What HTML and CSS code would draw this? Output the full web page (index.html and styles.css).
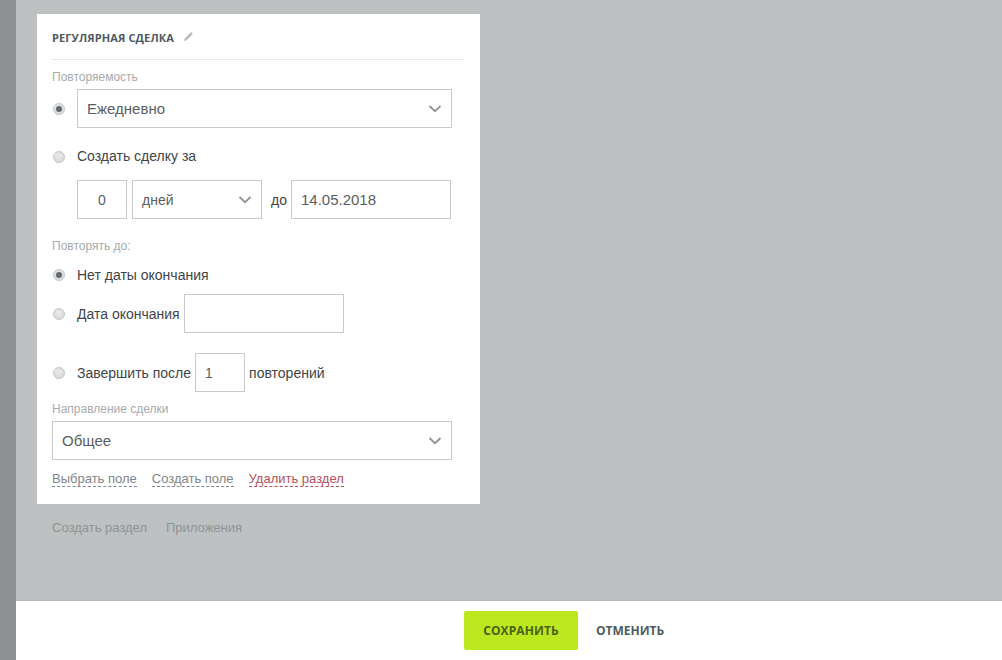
FILE: index.html
```html
<!DOCTYPE html>
<html lang="ru">
<head>
<meta charset="utf-8">
<title>Регулярная сделка</title>
<link rel="stylesheet" href="styles.css">
</head>
<body>
<div class="app">
  <aside class="rail"></aside>
  <div class="main">
    <div class="content">
      <section class="card">
        <header class="card-head">
          <h2 class="card-title">Регулярная сделка</h2>
          <svg class="pencil" width="11" height="11" viewBox="0 0 11 11"><path d="M1 10l.7-2.600L8 1.100 9.900 3 3.600 9.300z" fill="#b9bdbf"/></svg>
        </header>
        <div class="label label-first">Повторяемость</div>
        <div class="row row-select">
          <span class="radio checked"></span>
          <div class="field select grow large">Ежедневно
            <svg class="chev" width="14" height="8" viewBox="0 0 14 8"><path d="M1.500 1l5.500 5.200L12.500 1" fill="none" stroke="#909496" stroke-width="1.800"/></svg>
          </div>
        </div>
        <div class="row row-create">
          <span class="radio"></span>
          <span class="text raised">Создать сделку за</span>
        </div>
        <div class="row row-period">
          <div class="field num center">0</div>
          <div class="field select days">дней
            <svg class="chev" width="14" height="8" viewBox="0 0 14 8"><path d="M1.500 1l5.500 5.200L12.500 1" fill="none" stroke="#909496" stroke-width="1.800"/></svg>
          </div>
          <span class="text">до</span>
          <div class="field date large">14.05.2018</div>
        </div>
        <div class="label label-until">Повторять до:</div>
        <div class="row row-none">
          <span class="radio checked"></span>
          <span class="text">Нет даты окончания</span>
        </div>
        <div class="row row-end">
          <span class="radio"></span>
          <span class="text">Дата окончания</span>
          <div class="field end-date"></div>
        </div>
        <div class="row row-after">
          <span class="radio"></span>
          <span class="text">Завершить после</span>
          <div class="field num">1</div>
          <span class="text">повторений</span>
        </div>
        <div class="label label-dir">Направление сделки</div>
        <div class="field select dir large">Общее
          <svg class="chev" width="14" height="8" viewBox="0 0 14 8"><path d="M1.500 1l5.500 5.200L12.500 1" fill="none" stroke="#909496" stroke-width="1.800"/></svg>
        </div>
        <div class="links">
          <a class="link">Выбрать поле</a>
          <a class="link">Создать поле</a>
          <a class="link danger">Удалить раздел</a>
        </div>
      </section>
      <nav class="below">
        <span>Создать раздел</span>
        <span>Приложения</span>
      </nav>
    </div>
    <footer class="footer">
      <button class="btn-save">Сохранить</button>
      <button class="btn-cancel">Отменить</button>
    </footer>
  </div>
</div>
</body>
</html>
```
FILE: styles.css
```css
* { box-sizing: border-box; }
html, body { margin: 0; height: 100%; }
body { font-family: "Liberation Sans", Arial, sans-serif; font-size: 14px; color: #3f4548; overflow: hidden; }
.app { display: flex; width: 1002px; height: 660px; }
.rail { width: 16px; flex: none; background: #8f9192; }
.main { flex: 1; display: flex; flex-direction: column; background: #bdc1c2; }
.content { flex: 1; padding: 14px 0 0 21px; }
.card { width: 443px; height: 490px; background: #fff; padding: 0 15px; }
.card-head { display: flex; align-items: center; gap: 9px; height: 46px; padding-top: 1px; border-bottom: 1px solid #e8eaea; width: 412px; }
.card-title { margin: 0; font: 700 11px "Open Sans", sans-serif; letter-spacing: .12px; text-transform: uppercase; color: #4d5a63; }
.pencil { margin-bottom: 2px; }
.label { font-size: 12px; line-height: 14px; color: #a7abad; }
.label-first { margin-top: 10px; }
.label-until { margin-top: 20px; }
.label-dir { margin-top: 10px; }
.row { display: flex; align-items: center; }
.row-select { margin-top: 5px; }
.row-create { margin-top: 19px; height: 20px; }
.row-period { margin-top: 13px; padding-left: 25px; }
.row-none { margin-top: 12px; height: 20px; }
.row-end { margin-top: 9px; }
.row-after { margin-top: 20px; }
.radio { width: 12px; height: 12px; margin: 0 12px 0 1px; flex: none; border-radius: 50%; background: radial-gradient(circle at 50% 40%, #e9eaeb, #d2d4d5); border: 1px solid #c4c7c8; position: relative; }
.radio.checked::after { content: ""; position: absolute; left: 2px; top: 2px; width: 6px; height: 6px; border-radius: 50%; background: #62686c; }
.text { line-height: 20px; white-space: nowrap; color: #3f4548; }
.raised { margin-top: -2px; }
.field { height: 39px; border: 1px solid #c9caca; background: #fff; padding: 0 9px; line-height: 38px; color: #5a5e61; position: relative; flex: none; }
.large { font-size: 15px; }
.grow { width: 375px; }
.chev { position: absolute; right: 9px; top: 15px; }
.num { width: 50px; }
.center { text-align: center; padding: 0; }
.days { width: 130px; margin-left: 5px; }
.row-period .text { margin: 0 4px 0 9px; }
.date { width: 160px; }
.end-date { width: 160px; margin-left: 4px; }
.row-after .num { margin-left: 4px; }
.row-after .text:last-child { margin-left: 4px; }
.dir { width: 400px; margin-top: 5px; }
.links { display: flex; gap: 15px; margin-top: 11px; font-size: 13px; line-height: 15px; }
.link { color: #80868a; border-bottom: 1px dashed #80868a; }
.danger { color: #b5515b; border-bottom-color: #b5515b; }
.below { display: flex; gap: 19px; margin: 16px 0 0 15px; font-size: 13px; line-height: 15px; color: #8f9495; }
.footer { height: 59px; flex: none; background: #fff; display: flex; align-items: center; padding: 0 0 0 448px; box-shadow: 0 -1px 1px rgba(0,0,0,.04); }
.btn-save { width: 114px; height: 39px; border: 0; border-radius: 2px; background: #bbe81e; font: 700 12px "Open Sans", sans-serif; letter-spacing: .1px; text-transform: uppercase; color: #4e6018; padding: 0; }
.btn-cancel { margin-left: 18px; border: 0; background: none; padding: 0; font: 700 12px "Open Sans", sans-serif; text-transform: uppercase; color: #4f5a61; }
```
